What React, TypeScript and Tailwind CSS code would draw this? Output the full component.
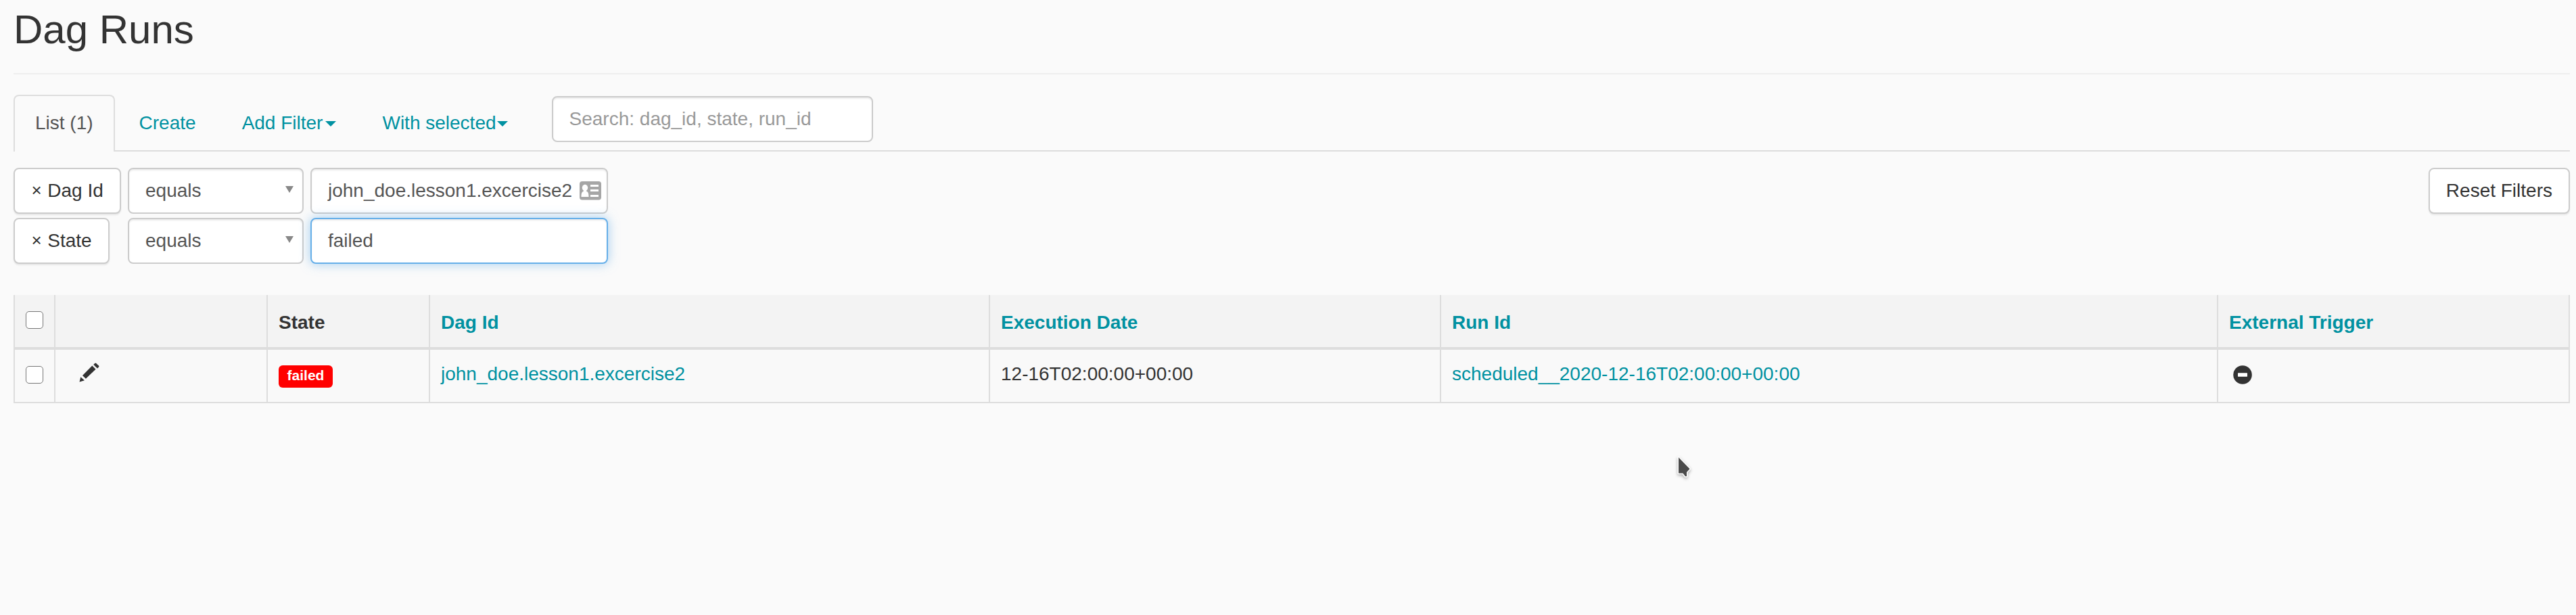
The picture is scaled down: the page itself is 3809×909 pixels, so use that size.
import React from "react";

const columns = [
  { label: "Dag Id", width: "w-[828px]" },
  { label: "Execution Date", width: "w-[667px]" },
  { label: "Run Id", width: "w-[1149px]" },
  { label: "External Trigger", width: "w-[520px]" },
];

function Caret({ className }: { className: string }) {
  return (
    <svg className={`mt-[2px] h-2 w-4 ${className}`} viewBox="0 0 16 8" fill="currentColor">
      <path d="M0 0h16L8 8z" />
    </svg>
  );
}

function RemoveButton({ label }: { label: string }) {
  return (
    <button className="flex h-[68px] items-center rounded-lg border-2 border-[#ccc] bg-white px-6 text-[#333] shadow-[0_2px_2px_rgba(0,0,0,0.08)]">
      <span className="mr-2 w-[16.3px] pb-[2px] text-center text-[26px]">×</span>
      <span>{label}</span>
    </button>
  );
}

function Operator() {
  return (
    <div className="mr-[10px] flex h-[68px] w-[260px] items-center justify-between rounded-lg border-2 border-[#ccc] bg-white pr-[13px] pl-6 text-[#555] shadow-[inset_0_2px_2px_rgba(0,0,0,0.075)]">
      <span>equals</span>
      <svg className="mb-1 h-[10px] w-3" viewBox="0 0 12 10" fill="#888">
        <path d="M0 0h12L6 10z" />
      </svg>
    </div>
  );
}

function ContactCard() {
  return (
    <svg className="h-7 w-8 shrink-0" viewBox="0 0 32 28">
      <rect width="32" height="27.5" rx="4" fill="#a6a6a6" />
      <g fill="#fff">
        <ellipse cx="8" cy="9.6" rx="4.2" ry="4.8" />
        <path d="M6 12h4v2.5c2.6 1 3.5 3 3.5 8.5H2.5c0-5.5.9-7.5 3.5-8.5z" />
        <path d="M16 5h12v3H16zM16 12h12v3H16zM16 20h12v3H16z" />
      </g>
    </svg>
  );
}

function Checkbox() {
  return (
    <input
      type="checkbox"
      className="block h-[26px] w-[26px] appearance-none rounded-[5px] border border-[#767676] bg-white"
    />
  );
}

function Pencil() {
  return (
    <svg className="h-[29px] w-[31px]" viewBox="0 0 31 29" fill="#333">
      <path d="M.5 28.5L2.3 21.3 8 26.3zM5 19L19.3 4.5 24.5 9.7 9.9 23.7zM21.2 3l2-2q1-1 2 0l3.8 3.6q1 1 0 2L27 8.4z" />
    </svg>
  );
}

function MinusCircle() {
  return (
    <svg className="h-7 w-7" viewBox="0 0 28 28">
      <circle cx="14" cy="14" r="13.8" fill="#333" />
      <rect x="7" y="11.3" width="14" height="5.4" rx="0.6" fill="#fff" />
    </svg>
  );
}

export default function App() {
  return (
    <div className="relative h-[909px] w-[3809px] overflow-hidden bg-[#fafafa] pr-[9px] pl-5 font-['Liberation_Sans',Arial,sans-serif] text-[28px] leading-10 text-[#333]">
      <header className="h-[110px] border-b-2 border-[#eee] pt-[11px]">
        <h2 className="text-[60px] leading-[66px]">Dag Runs</h2>
      </header>

      <nav className="mt-[30px] flex h-[84px] gap-1 border-b-2 border-[#ddd] text-[#0091a1]">
        <a className="h-[84px] rounded-t-lg border-2 border-b-0 border-[#ddd] bg-[#fafafa] px-[30px] pt-5 text-[#555]">
          List (1)
        </a>
        <a className="px-8 pt-[22px]">Create</a>
        <a className="flex h-[62px] items-center px-8 pt-[22px]">
          Add Filter
          <Caret className="ml-1" />
        </a>
        <a className="flex h-[62px] items-center px-8 pt-[22px]">
          With selected
          <Caret className="ml-px" />
        </a>
        <input
          placeholder="Search: dag_id, state, run_id"
          className="mt-[2px] ml-[29px] h-[68px] w-[475px] rounded-lg border-2 border-[#ccc] bg-white px-6 shadow-[inset_0_2px_2px_rgba(0,0,0,0.075)] placeholder:text-[#999]"
        />
      </nav>

      <section className="mt-6 flex items-start justify-between">
        <div className="flex flex-col gap-[6px]">
          <div className="flex">
            <div className="w-[169px]">
              <RemoveButton label="Dag Id" />
            </div>
            <Operator />
            <div className="flex h-[68px] w-[440px] items-center justify-between rounded-lg border-2 border-[#ccc] bg-white pr-2 pl-6 text-[#555] shadow-[inset_0_2px_2px_rgba(0,0,0,0.075)]">
              <span>john_doe.lesson1.excercise2</span>
              <ContactCard />
            </div>
          </div>
          <div className="flex">
            <div className="w-[169px]">
              <RemoveButton label="State" />
            </div>
            <Operator />
            <div className="flex h-[68px] w-[440px] items-center rounded-lg border-2 border-[#66afe9] bg-white px-6 text-[#555] shadow-[inset_0_2px_2px_rgba(0,0,0,0.075),0_0_16px_rgba(102,175,233,0.6)]">
              failed
            </div>
          </div>
        </div>
        <button className="h-[68px] rounded-lg border-2 border-[#ccc] bg-white px-6 shadow-[0_2px_2px_rgba(0,0,0,0.08)]">
          Reset Filters
        </button>
      </section>

      <section className="mt-[46px] w-[3780px] border-r-2 border-[#ddd]">
        <div className="flex h-[81px] border-b-4 border-[#ddd] bg-[#f3f3f3] font-bold">
          <div className="w-[60px] border-l-2 border-[#ddd] pt-6 pl-4">
            <Checkbox />
          </div>
          <div className="w-[314px] border-l-2 border-[#ddd]" />
          <div className="w-[240px] border-l-2 border-[#ddd] pt-[21px] pl-4">State</div>
          {columns.map((column) => (
            <div key={column.label} className={`${column.width} border-l-2 border-[#ddd] pt-[21px] pl-4 text-[#0091a1]`}>
              {column.label}
            </div>
          ))}
        </div>
        <div className="flex h-[79px] border-b-2 border-[#ddd] bg-[#f9f9f9]">
          <div className="w-[60px] border-l-2 border-[#ddd] pt-6 pl-4">
            <Checkbox />
          </div>
          <div className="w-[314px] border-l-2 border-[#ddd] pt-[19px] pl-[35px]">
            <Pencil />
          </div>
          <div className="w-[240px] border-l-2 border-[#ddd] pt-[23px] pl-4">
            <span className="block h-[33px] w-20 rounded-md bg-[#f00] text-center text-[21px] leading-[29px] font-bold text-white">
              failed
            </span>
          </div>
          <div className="w-[828px] border-l-2 border-[#ddd] pt-4 pl-4 text-[#0091a1]">john_doe.lesson1.excercise2</div>
          <div className="w-[667px] border-l-2 border-[#ddd] pt-4 pl-4">12-16T02:00:00+00:00</div>
          <div className="w-[1149px] border-l-2 border-[#ddd] pt-4 pl-4 text-[#0091a1]">
            scheduled__2020-12-16T02:00:00+00:00
          </div>
          <div className="w-[520px] border-l-2 border-[#ddd] pt-[23px] pl-[22px]">
            <MinusCircle />
          </div>
        </div>
      </section>

      <svg
        className="absolute top-[672px] left-[2478px] h-9 w-7 drop-shadow-[0_2px_2px_rgba(0,0,0,0.3)]"
        viewBox="0 0 28 36"
      >
        <path
          d="M4 4v23.5h6.5L14 32h2v-6l4.5-5z"
          fill="#4b4b4b"
          stroke="#fff"
          strokeWidth="3"
          strokeLinejoin="round"
          paintOrder="stroke"
        />
      </svg>
    </div>
  );
}
